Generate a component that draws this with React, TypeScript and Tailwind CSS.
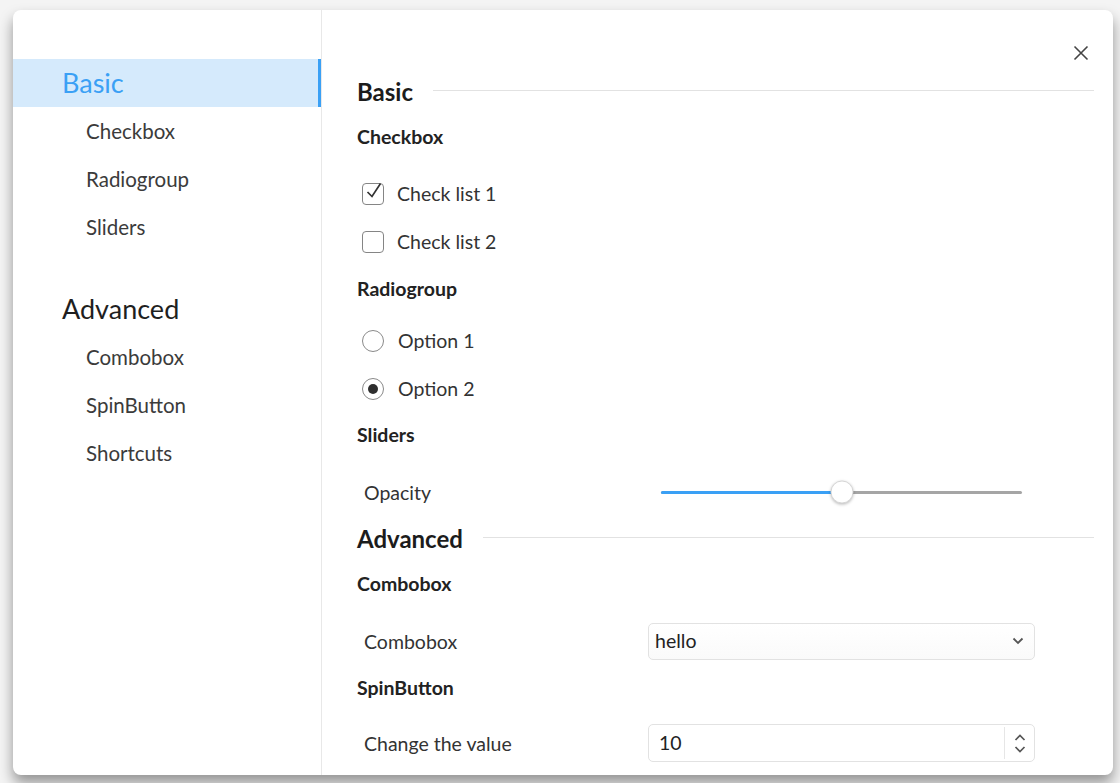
import React, { useState } from "react";

const font = { fontFamily: "Lato, 'Noto Sans', sans-serif" };

const SideItem: React.FC<{ label: string }> = ({ label }) => (
	<div className="h-[48px] flex items-center pl-[73px] text-[20.5px] text-[#3b3b3b]">{label}</div>
);

const Heading: React.FC<{ title: string }> = ({ title }) => (
	<div className="flex items-center gap-5 h-full">
		<span className="text-[24px] font-bold text-[#1c1c1c]">{title}</span>
		<div className="flex-1 h-px bg-[#e2e2e2] -mt-[3px]" />
	</div>
);

const SubHeading: React.FC<{ title: string }> = ({ title }) => (
	<div className="flex items-center h-full text-[19.5px] font-bold text-[#222]">{title}</div>
);

const Row: React.FC<{ label: string; children: React.ReactNode }> = ({ label, children }) => (
	<div className="grid grid-cols-[291px_387px] items-center h-full">
		<span className="pl-[7px] pt-[2px] text-[19.5px] text-[#333]">{label}</span>
		<div>{children}</div>
	</div>
);

const CheckItem: React.FC<{ label: string; checked: boolean }> = ({ label, checked }) => (
	<div className="flex items-center h-full pl-[5px] gap-[13px]">
		<div className="relative w-[22px] h-[22px] rounded-[4px] border-[1.5px] border-[#858585]">
			{checked && (
				<svg className="absolute left-[2px] -top-[3px]" width="18" height="20" viewBox="0 0 18 20">
					<path d="M2.5 11 L7 15.5 L15.5 2.5" fill="none" stroke="#333" strokeWidth="1.7" />
				</svg>
			)}
		</div>
		<span className="text-[19.5px] text-[#333]">{label}</span>
	</div>
);

const RadioItem: React.FC<{ label: string; checked: boolean }> = ({ label, checked }) => (
	<div className="flex items-center h-full pl-[5px] gap-[14px]">
		<div className="w-[22px] h-[22px] rounded-full border-[1.5px] border-[#8a8a8a] flex items-center justify-center">
			{checked && <div className="w-[10px] h-[10px] rounded-full bg-[#2e2e2e]" />}
		</div>
		<span className="text-[19.5px] text-[#333]">{label}</span>
	</div>
);

const Slider: React.FC<{ value: number }> = ({ value }) => (
	<div className="px-[13px]">
		<div className="relative h-[3px] rounded-full bg-[#a5a5a5]">
			<div className="h-full rounded-full bg-[#3aa0f5]" style={{ width: `${value}%` }} />
			<div
				className="absolute top-1/2 w-[23px] h-[23px] -translate-x-1/2 -translate-y-1/2 rounded-full bg-white border border-[#d6d6d6] shadow-[0_1px_3px_rgba(0,0,0,0.25)]"
				style={{ left: `${value}%` }}
			/>
		</div>
	</div>
);

const App: React.FC = () => {
	const [opacity] = useState(50);
	return (
		<div className="w-[1120px] h-[783px] bg-[#f4f4f4] pt-[10px] pl-[13px] overflow-hidden" style={font}>
			<div className="w-[1100px] h-[765px] bg-white rounded-lg shadow-[0_8px_14px_rgba(0,0,0,0.4)] flex overflow-hidden">
				<div className="w-[309px] border-r border-[#e8e8e8] pt-[49px] shrink-0">
					<div className="h-[48px] flex items-center pl-[49px] bg-[#d5eafc] border-r-[3px] border-[#3aa0f5] text-[27px] text-[#3aa0f5]">
						Basic
					</div>
					<SideItem label="Checkbox" />
					<SideItem label="Radiogroup" />
					<SideItem label="Sliders" />
					<div className="h-[48px] mt-[34px] flex items-center pl-[49px] text-[27px] text-[#1f1f1f]">Advanced</div>
					<SideItem label="Combobox" />
					<SideItem label="SpinButton" />
					<SideItem label="Shortcuts" />
				</div>
				<div className="relative flex-1 pl-[35px] pr-[19px] pt-[62px]">
					<button className="absolute right-[15px] top-[26px] w-[34px] h-[34px] flex items-center justify-center">
						<svg width="16" height="16" viewBox="0 0 16 16">
							<path d="M1.5 1.5 L14.5 14.5 M14.5 1.5 L1.5 14.5" stroke="#444" strokeWidth="1.6" />
						</svg>
					</button>
					<div className="h-[40px]"><Heading title="Basic" /></div>
					<div className="h-[50px]"><SubHeading title="Checkbox" /></div>
					<div className="h-[48px] mt-[8px]"><CheckItem label="Check list 1" checked /></div>
					<div className="h-[48px]"><CheckItem label="Check list 2" checked={false} /></div>
					<div className="h-[46px]"><SubHeading title="Radiogroup" /></div>
					<div className="h-[48px] mt-[5px]"><RadioItem label="Option 1" checked={false} /></div>
					<div className="h-[48px]"><RadioItem label="Option 2" checked /></div>
					<div className="h-[44px]"><SubHeading title="Sliders" /></div>
					<div className="h-[48px] mt-[11px]">
						<Row label="Opacity"><Slider value={opacity} /></Row>
					</div>
					<div className="h-[46px]"><Heading title="Advanced" /></div>
					<div className="h-[44px]"><SubHeading title="Combobox" /></div>
					<div className="h-[48px] mt-[11px]">
						<Row label="Combobox">
							<div className="h-[37px] rounded-[5px] border border-[#e2e2e2] bg-gradient-to-b from-white to-[#fafafa] flex items-center justify-between pl-[6px] pr-[10px] text-[19.5px] text-[#222]">
								<span>hello</span>
								<svg width="12" height="8" viewBox="0 0 12 8">
									<path d="M1.5 1.5 L6 6 L10.5 1.5" fill="none" stroke="#555" strokeWidth="1.8" />
								</svg>
							</div>
						</Row>
					</div>
					<div className="h-[46px]"><SubHeading title="SpinButton" /></div>
					<div className="h-[48px] mt-[8px]">
						<Row label="Change the value">
							<div className="h-[38px] rounded-[5px] border border-[#e2e2e2] flex items-stretch text-[19.5px] text-[#222]">
								<div className="flex-1 flex items-center pl-[10px]">10</div>
								<div className="w-[30px] border-l border-[#e6e6e6] my-[2px] flex flex-col items-center justify-center gap-[5px]">
									<svg width="12" height="7" viewBox="0 0 12 7">
										<path d="M1.5 6 L6 1.5 L10.5 6" fill="none" stroke="#555" strokeWidth="1.7" />
									</svg>
									<svg width="12" height="7" viewBox="0 0 12 7">
										<path d="M1.5 1 L6 5.5 L10.5 1" fill="none" stroke="#555" strokeWidth="1.7" />
									</svg>
								</div>
							</div>
						</Row>
					</div>
				</div>
			</div>
		</div>
	);
};

export default App;
